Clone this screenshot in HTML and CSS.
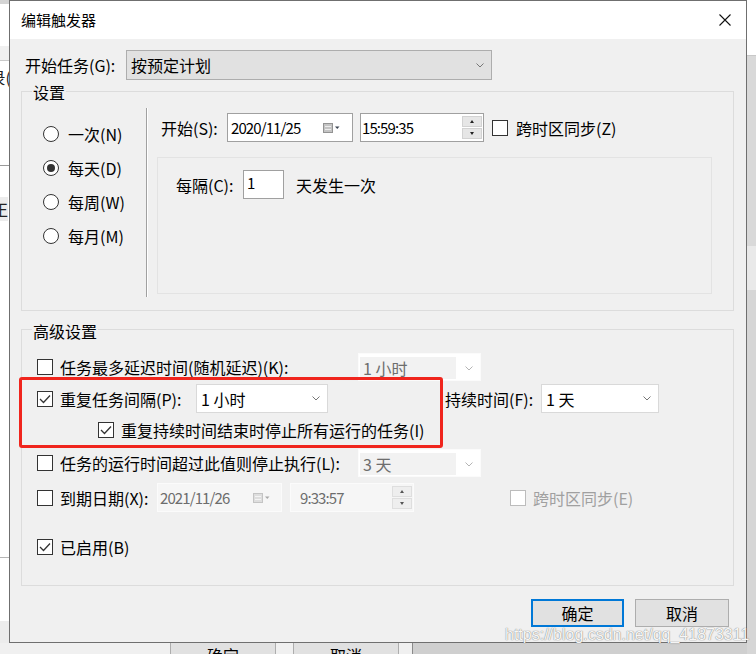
FILE: index.html
```html
<!DOCTYPE html>
<html>
<head>
    <meta http-equiv="content-type" content="text/html; charset=UTF-8">
    <title>编辑触发器</title>
    <link rel="stylesheet" href="styles.css">
</head>

<body>
    <div class="desk">
        <div class="desk-top"></div>
        <div class="desk-band"></div>
        <span class="desk-txt t1">记录(</span>
        <div class="desk-line l1"></div>
        <span class="desk-txt t2">正</span>
        <div class="desk-line l2"></div>
        <div class="desk-corner"></div>
        <div class="desk-foot"></div>
        <div class="desk-foot-right"></div>
        <div class="desk-btn b1">确定</div>
        <div class="desk-btn b2">取消</div>
        <div class="desk-right"></div>
    </div>

    <div class="dialog">
        <div class="titlebar">
            <span>编辑触发器</span>
            <svg class="close" width="12" height="12" viewBox="0 0 12 12"><path d="M0.5 0.5 L11.5 11.5 M11.5 0.5 L0.5 11.5" stroke="#111" stroke-width="1.1" fill="none"/></svg>
        </div>

        <div class="content">
            <div class="row-top">
                <span class="lbl-top">开始任务(G):</span>
                <div class="combo-main">
                    <span>按预定计划</span>
                    <svg class="chev" width="8" height="5" viewBox="0 0 8 5"><polyline points="0.5,0.5 4,4 7.5,0.5" fill="none" stroke="#777" stroke-width="1"/></svg>
                </div>
            </div>

            <div class="group g1">
                <span class="group-title">设置</span>
                <div class="sched">
                    <div class="freq">
                        <div class="radio-row"><span class="rb"></span><span>一次(N)</span></div>
                        <div class="radio-row"><span class="rb on"></span><span>每天(D)</span></div>
                        <div class="radio-row"><span class="rb"></span><span>每周(W)</span></div>
                        <div class="radio-row"><span class="rb"></span><span>每月(M)</span></div>
                    </div>
                    <div class="sep"></div>
                    <div class="sched-right">
                        <div class="start-row">
                            <span class="lbl-start">开始(S):</span>
                            <div class="field date">
                                <span class="num">2020/11/25</span>
                                <svg class="cal" width="17" height="10" viewBox="0 0 17 10"><rect x="0.5" y="0.5" width="9" height="9" fill="#c4c4c4" stroke="#939393"/><path d="M2 3.5h6M2 6.5h6" stroke="#ececec"/><path d="M12 3.5h4.5l-2.25 2.5z" fill="#3b4452"/></svg>
                            </div>
                            <div class="field time">
                                <span class="num">15:59:35</span>
                                <div class="spin"><div class="spin-btn up"></div><div class="spin-btn down"></div></div>
                            </div>
                            <span class="cb start-cb"></span>
                            <span class="cbl">跨时区同步(Z)</span>
                        </div>
                        <div class="daily">
                            <div class="daily-row">
                                <span class="lbl-every">每隔(C):</span>
                                <div class="field every"><span class="num">1</span></div>
                                <span class="every-txt">天发生一次</span>
                            </div>
                        </div>
                    </div>
                </div>
            </div>

            <div class="group g2">
                <span class="group-title">高级设置</span>

                <div class="adv-row ra">
                    <span class="cb"></span>
                    <span class="cbl w-long">任务最多延迟时间(随机延迟)(K):</span>
                    <div class="combo dis">
                        <span class="dis-text">1 小时</span>
                        <svg class="chev" width="8" height="5" viewBox="0 0 8 5"><polyline points="0.5,0.5 4,4 7.5,0.5" fill="none" stroke="#b4b4b4" stroke-width="1"/></svg>
                    </div>
                </div>

                <div class="adv-row rb2">
                    <span class="cb"><svg width="12" height="10" viewBox="0 0 12 10"><path d="M1 5 L4.5 8.5 L11 1.5" fill="none" stroke="#333" stroke-width="1.3"/></svg></span>
                    <span class="cbl w-rep">重复任务间隔(P):</span>
                    <div class="combo c-rep">
                        <span>1 小时</span>
                        <svg class="chev" width="8" height="5" viewBox="0 0 8 5"><polyline points="0.5,0.5 4,4 7.5,0.5" fill="none" stroke="#777" stroke-width="1"/></svg>
                    </div>
                    <span class="lbl-dur">持续时间(F):</span>
                    <div class="combo c-dur">
                        <span>1 天</span>
                        <svg class="chev" width="8" height="5" viewBox="0 0 8 5"><polyline points="0.5,0.5 4,4 7.5,0.5" fill="none" stroke="#777" stroke-width="1"/></svg>
                    </div>
                </div>

                <div class="adv-row rc">
                    <span class="cb"><svg width="12" height="10" viewBox="0 0 12 10"><path d="M1 5 L4.5 8.5 L11 1.5" fill="none" stroke="#333" stroke-width="1.3"/></svg></span>
                    <span class="cbl">重复持续时间结束时停止所有运行的任务(I)</span>
                </div>

                <div class="adv-row rd">
                    <span class="cb"></span>
                    <span class="cbl w-long">任务的运行时间超过此值则停止执行(L):</span>
                    <div class="combo dis">
                        <span class="dis-text">3 天</span>
                        <svg class="chev" width="8" height="5" viewBox="0 0 8 5"><polyline points="0.5,0.5 4,4 7.5,0.5" fill="none" stroke="#b4b4b4" stroke-width="1"/></svg>
                    </div>
                </div>

                <div class="adv-row re">
                    <span class="cb"></span>
                    <span class="cbl w-exp">到期日期(X):</span>
                    <div class="field dis e-date">
                        <span class="num">2021/11/26</span>
                        <svg class="cal" width="17" height="10" viewBox="0 0 17 10"><rect x="0.5" y="0.5" width="9" height="9" fill="#dedede" stroke="#c4c4c4"/><path d="M2 3.5h6M2 6.5h6" stroke="#f4f4f4"/><path d="M12 3.5h4.5l-2.25 2.5z" fill="#a8a8a8"/></svg>
                    </div>
                    <div class="field dis e-time">
                        <span class="num">9:33:57</span>
                        <div class="spin"><div class="spin-btn up"></div><div class="spin-btn down"></div></div>
                    </div>
                    <span class="cb dim e-cb"></span>
                    <span class="cbl dim-text">跨时区同步(E)</span>
                </div>

                <div class="adv-row rf">
                    <span class="cb"><svg width="12" height="10" viewBox="0 0 12 10"><path d="M1 5 L4.5 8.5 L11 1.5" fill="none" stroke="#333" stroke-width="1.3"/></svg></span>
                    <span class="cbl">已启用(B)</span>
                </div>

                <div class="mark"></div>
            </div>

            <div class="buttons">
                <div class="btn default">确定</div>
                <div class="btn">取消</div>
            </div>
        </div>
    </div>

    <div class="watermark">https://blog.csdn.net/qq_41873311</div>
</body>

</html>
```

FILE: styles.css
```css
* {
    box-sizing: border-box;
}

body {
    margin: 0;
    width: 756px;
    height: 654px;
    position: relative;
    overflow: hidden;
    background: #fff;
    font-family: "Noto Sans CJK SC", sans-serif;
    font-size: 16px;
    line-height: 20px;
    color: #000;
}

/* window underneath the dialog */
.desk-top,
.desk-band,
.desk-txt,
.desk-line,
.desk-corner,
.desk-foot,
.desk-foot-right,
.desk-btn,
.desk-right {
    position: absolute;
}

.desk-top {
    left: 0;
    top: 0;
    width: 9px;
    height: 4px;
    background: #d4d4d4;
}

.desk-band {
    left: 0;
    top: 46px;
    width: 9px;
    height: 15px;
    background: #f0f0f0;
    border-bottom: 1px solid #c9c9c9;
}

.desk-txt {
    right: 745px;
    white-space: nowrap;
    color: #222;
}

.t1 {
    top: 67px;
}

.t2 {
    top: 197px;
    height: 24px;
    line-height: 24px;
    right: 748px;
    background: #ececec;
}

.desk-line {
    left: 0;
    width: 9px;
    height: 1px;
}

.l1 {
    top: 165px;
    background: #9a9a9a;
}

.l2 {
    top: 557px;
    background: #b5b5b5;
}

.desk-corner {
    left: 0;
    top: 621px;
    width: 9px;
    height: 33px;
    background: #ececec;
}

.desk-foot {
    left: 0;
    top: 643px;
    width: 412px;
    height: 11px;
    background: #f0f0f0;
}

.desk-foot-right {
    left: 412px;
    top: 643px;
    width: 344px;
    height: 11px;
    background: #cfcfcf;
    border-left: 1px solid #8a8a8a;
}

.desk-btn {
    top: 640px;
    width: 106px;
    height: 30px;
    background: #e1e1e1;
    border: 1px solid #adadad;
    text-align: center;
    line-height: 28px;
}

.b1 {
    left: 170px;
}

.b2 {
    left: 293px;
}

.desk-right {
    left: 747px;
    top: 0;
    width: 9px;
    height: 654px;
    background: linear-gradient(to bottom, #fff 0 55px, #c8c8c8 55px 56px, #d9d9d9 56px 246px, #e9e9e9 246px 290px, #d6d6d6 290px);
}

/* dialog */
.dialog {
    position: absolute;
    left: 9px;
    top: 0;
    width: 738px;
    height: 643px;
    border: 1px solid #6f6f6f;
    background: #f0f0f0;
    display: flex;
    flex-direction: column;
}

.titlebar {
    flex: none;
    height: 38px;
    background: #fff;
    display: flex;
    align-items: center;
    justify-content: space-between;
    padding: 0 15px 0 11px;
    font-size: 15px;
}

.content {
    flex: 1;
    padding: 11px 12px 0 11px;
}

.row-top {
    display: flex;
    align-items: center;
    height: 30px;
}

.lbl-top {
    width: 105px;
    padding-left: 4px;
}

.combo-main {
    width: 366px;
    height: 30px;
    border: 1px solid #adadad;
    background: #e1e1e1;
    display: flex;
    align-items: center;
    justify-content: space-between;
    padding: 0 7px 0 4px;
}

.chev {
    flex: none;
}

.group {
    position: relative;
    border: 1px solid #dcdcdc;
}

.g1 {
    margin-top: 11px;
    padding-bottom: 13px;
}

.g2 {
    margin-top: 18px;
    padding-bottom: 27px;
}

.group-title {
    display: block;
    width: fit-content;
    height: 18px;
    line-height: 18px;
    margin: -9px 0 0 10px;
    padding: 0 1px;
    background: #f0f0f0;
}

.g2 .group-title {
    margin-top: -8px;
}

.sched {
    display: flex;
    height: 189px;
    margin-top: 7px;
}

.freq {
    width: 124px;
    padding: 9px 0 0 21px;
}

.radio-row {
    display: flex;
    align-items: center;
    height: 34px;
}

.rb {
    flex: none;
    width: 16px;
    height: 16px;
    margin-right: 9px;
    border-radius: 50%;
    border: 1px solid #333;
    background: #fff;
    display: flex;
    align-items: center;
    justify-content: center;
}

.rb.on::after {
    content: "";
    width: 8px;
    height: 8px;
    border-radius: 50%;
    background: #333;
}

.sep {
    width: 2px;
    border-left: 1px solid #a0a0a0;
    background: #fff;
}

.sched-right {
    flex: 1;
    padding-top: 5px;
}

.start-row {
    display: flex;
    align-items: center;
    height: 29px;
    padding-left: 13px;
}

.lbl-start {
    width: 66px;
}

.field {
    flex: none;
    height: 29px;
    border: 1px solid #a0a0a0;
    background: #fff;
    display: flex;
    align-items: center;
    justify-content: space-between;
}

.num {
    font-size: 15px;
    letter-spacing: -0.9px;
}

.date {
    width: 126px;
    padding: 0 12px 0 3px;
}

.time {
    width: 124px;
    margin-left: 7px;
    padding: 0 1px 0 1px;
}

.spin {
    width: 20px;
    display: flex;
    flex-direction: column;
    gap: 1px;
}

.spin-btn {
    height: 11px;
    background: #e6e6e6;
    border: 1px solid #d2d2d2;
    display: flex;
    align-items: center;
    justify-content: center;
}

.spin-btn::after {
    content: "";
    border-left: 2.5px solid transparent;
    border-right: 2.5px solid transparent;
}

.up::after {
    border-bottom: 3px solid #222;
}

.down::after {
    border-top: 3px solid #222;
}

.start-cb {
    margin-left: 8px;
}

.start-row .cbl {
    margin-left: 8px;
}

.daily {
    width: 555px;
    height: 137px;
    margin: 15px 0 0 9px;
    border: 1px solid #e3e3e3;
    padding: 12px 0 0 18px;
}

.daily-row {
    display: flex;
    align-items: center;
    height: 29px;
}

.lbl-every {
    width: 67px;
}

.every {
    width: 41px;
    padding-left: 3px;
    justify-content: flex-start;
    align-items: flex-start;
    padding-top: 2px;
}

.every-txt {
    margin-left: 12px;
}

/* advanced rows */
.adv-row {
    display: flex;
    align-items: center;
    padding-left: 15px;
}

.ra {
    margin-top: 13px;
    height: 28px;
}

.rb2 {
    margin-top: 3px;
    height: 29px;
}

.rc {
    margin-top: 6px;
    height: 22px;
    padding-left: 76px;
}

.rd {
    margin-top: 8px;
    height: 28px;
}

.re {
    margin-top: 6px;
    height: 29px;
}

.rf {
    margin-top: 24px;
    height: 22px;
}

.cb {
    flex: none;
    width: 16px;
    height: 16px;
    border: 1px solid #333;
    background: #fff;
    display: flex;
    align-items: center;
    justify-content: center;
}

.cb.dim {
    border-color: #bcbcbc;
}

.cbl {
    margin-left: 7px;
    white-space: nowrap;
}

.w-long {
    width: 298px;
    flex: none;
}

.w-rep {
    width: 136px;
    flex: none;
}

.w-exp {
    width: 97px;
    flex: none;
}

.combo {
    flex: none;
    height: 100%;
    border: 1px solid #d9d9d9;
    background: #fff;
    display: flex;
    align-items: center;
    justify-content: space-between;
    padding: 0 7px 0 4px;
}

.c-rep {
    width: 132px;
}

.c-dur {
    width: 118px;
}

.lbl-dur {
    width: 96px;
    margin-left: 117px;
    flex: none;
}

.combo.dis {
    width: 123px;
    border-color: #fbfbfb;
    padding: 3px 7px 1px 1px;
    align-items: stretch;
}

.dis-text {
    flex: 1;
    margin-right: 9px;
    padding-left: 3px;
    background: #f2f2f2;
    color: #6d6d6d;
    display: flex;
    align-items: center;
}

.combo.dis .chev {
    align-self: center;
}

.field.dis {
    border-color: #fbfbfb;
    background: #f6f6f6;
    color: #6d6d6d;
}

.e-date {
    width: 125px;
    padding: 0 11px 0 2px;
}

.e-time {
    width: 124px;
    margin-left: 8px;
    padding: 0 1px 0 9px;
}

.field.dis .spin-btn {
    background: #eeeeee;
    border-color: #dedede;
}

.field.dis .up::after {
    border-bottom-color: #555;
}

.field.dis .down::after {
    border-top-color: #555;
}

.e-cb {
    margin-left: 96px;
}

.dim-text {
    color: #a0a0a0;
}

.mark {
    position: absolute;
    left: -3px;
    top: 47px;
    width: 424px;
    height: 71px;
    border: 3px solid #f0251d;
    border-radius: 3px;
}

.buttons {
    display: flex;
    justify-content: flex-end;
    gap: 11px;
    margin-top: 13px;
    padding-right: 5px;
}

.btn {
    width: 94px;
    height: 28px;
    background: #e1e1e1;
    border: 1px solid #adadad;
    display: flex;
    align-items: center;
    justify-content: center;
}

.btn.default {
    width: 93px;
    border: 2px solid #0078d7;
}

.watermark {
    position: absolute;
    left: 505px;
    top: 625px;
    font-family: "Liberation Sans", sans-serif;
    font-size: 16px;
    line-height: 20px;
    color: rgba(255, 255, 255, 0.95);
    text-shadow: 0 0 1px rgba(90, 90, 90, 0.75), 0 0 1px rgba(90, 90, 90, 0.45);
    white-space: nowrap;
}
```
